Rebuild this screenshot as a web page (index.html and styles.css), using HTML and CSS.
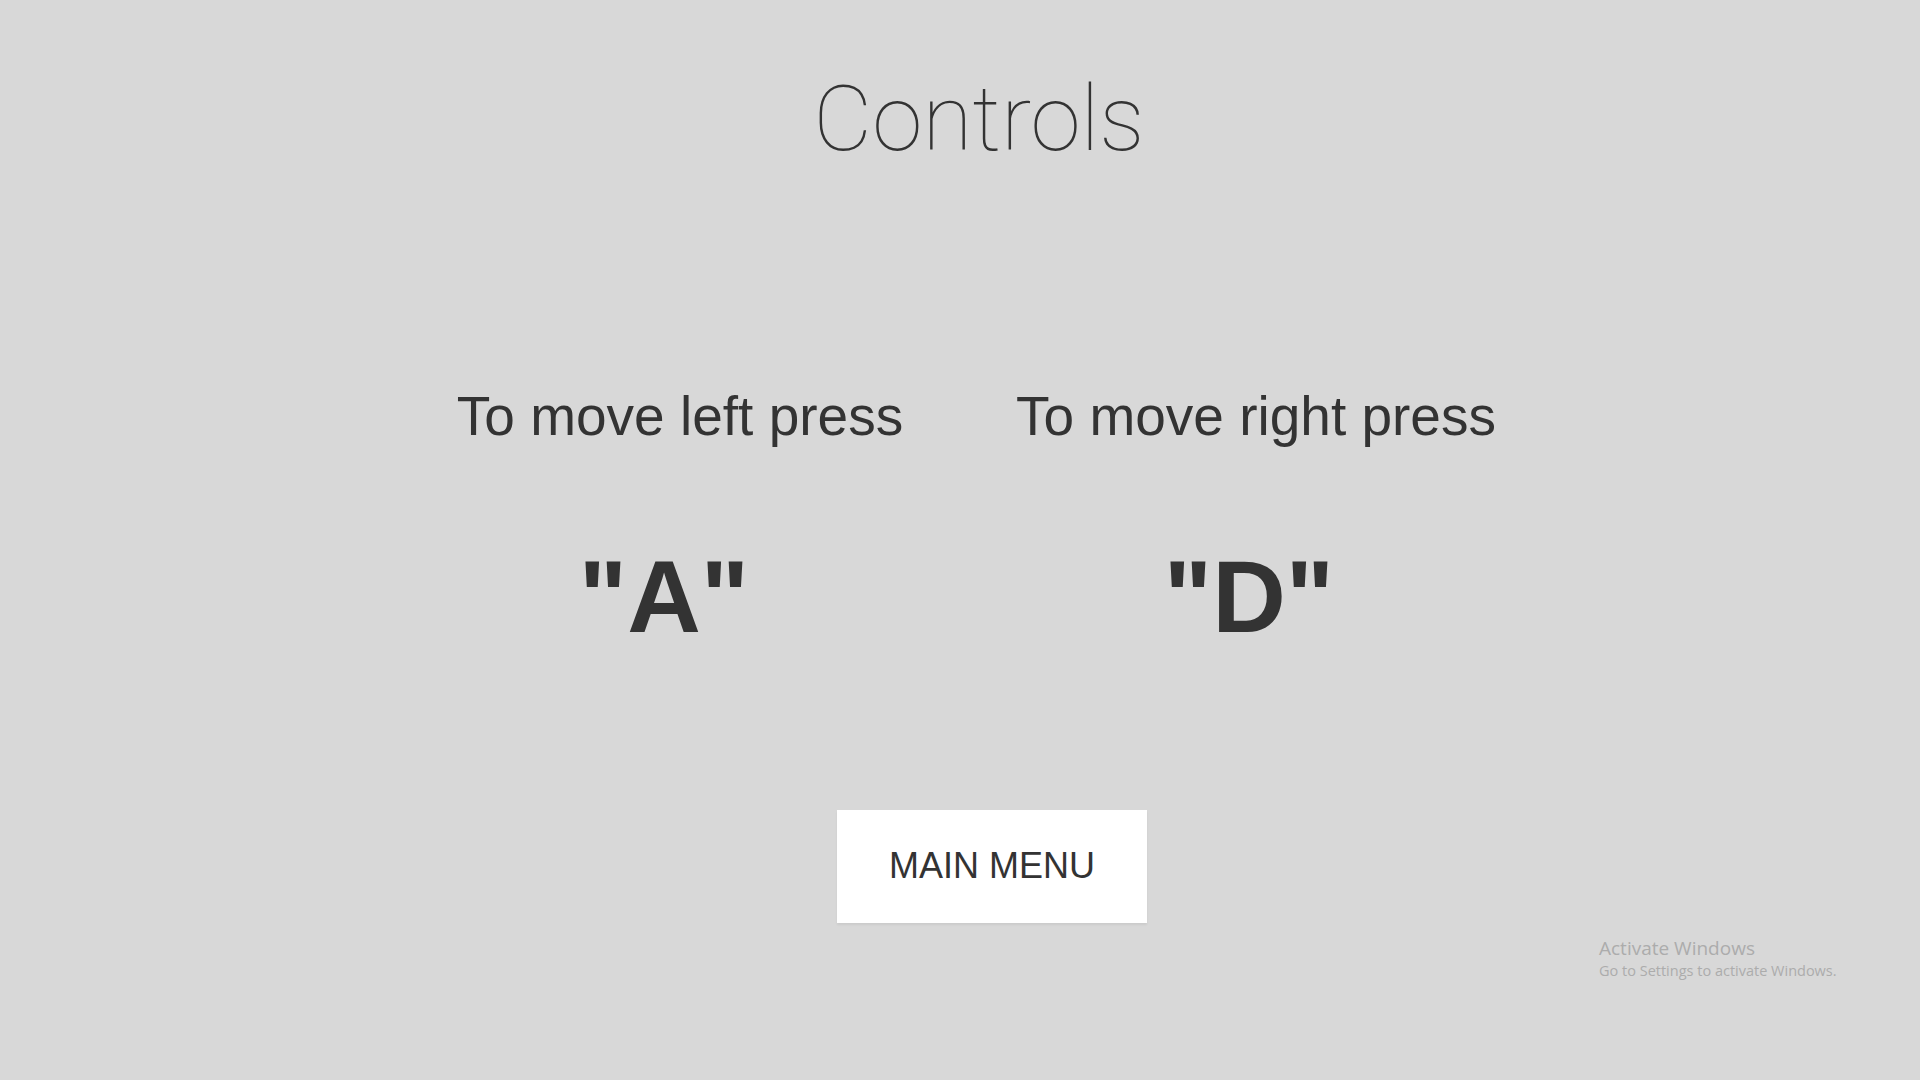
FILE: index.html
```html
<!DOCTYPE html>
<html lang="en">
<head>
<meta charset="utf-8">
<title>Controls</title>
<link rel="stylesheet" href="styles.css">
</head>
<body>
<main class="page">
  <h1 class="title">Controls</h1>
  <section class="controls">
    <div class="control control-left">
      <p class="label">To move left press</p>
      <p class="key">"A"</p>
    </div>
    <div class="control control-right">
      <p class="label">To move right press</p>
      <p class="key">"D"</p>
    </div>
  </section>
  <button class="menu-btn" type="button">MAIN MENU</button>
</main>
<div class="watermark">
  <div class="wm-title">Activate Windows</div>
  <div class="wm-sub">Go to Settings to activate Windows.</div>
</div>
</body>
</html>
```
FILE: styles.css
```css
html, body {
  margin: 0;
  padding: 0;
  height: 100%;
  background: #d8d8d8;
}
body {
  font-family: "Liberation Sans", Arial, sans-serif;
  color: #333333;
  overflow: hidden;
}
.page {
  display: flex;
  flex-direction: column;
  align-items: center;
  padding-top: 74px;
}
.title {
  margin: 0;
  font-family: Roboto, "Liberation Sans", sans-serif;
  font-weight: 100;
  font-size: 91px;
  line-height: 1;
  color: #333;
  padding-left: 38px;
}
.controls {
  display: grid;
  grid-template-columns: 580px 580px;
  margin-top: 224px;
}
.control {
  display: flex;
  flex-direction: column;
  align-items: center;
}
.label {
  margin: 0;
  font-size: 55px;
  line-height: 1;
}
.key {
  margin: 102px 0 0;
  font-size: 102px;
  font-weight: 700;
  line-height: 1;
}
.control-left .label {
  padding-left: 20px;
}
.control-left .key {
  padding-right: 12px;
}
.control-right .label {
  padding-left: 12px;
}
.control-right .key {
  padding-right: 2px;
}
.menu-btn {
  margin-top: 162px;
  margin-left: 64px;
  background: #ffffff;
  border: none;
  padding: 38px 52px 39px;
  font-family: "Liberation Sans", Arial, sans-serif;
  font-size: 36px;
  line-height: 1;
  color: #333;
  box-shadow: 0 2px 2px rgba(0, 0, 0, 0.06);
}
.watermark {
  position: absolute;
  left: 1599px;
  top: 936px;
  font-family: "Open Sans", "Noto Sans", sans-serif;
  color: #acacac;
}
.wm-title {
  font-size: 19px;
  line-height: 25px;
}
.wm-sub {
  font-size: 14.5px;
  line-height: 20px;
}
```
